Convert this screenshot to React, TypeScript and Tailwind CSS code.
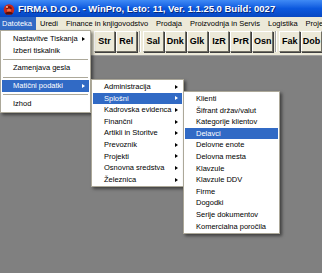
import React from "react";

const Arrow = ({ white }: { white?: boolean }) => (
  <span
    className={
      white
        ? "block w-0 h-0 border-y-[2.5px] border-y-transparent border-l-[3px] border-l-white"
        : "block w-0 h-0 border-y-[2.5px] border-y-transparent border-l-[3px] border-l-black"
    }
  />
);

function Item({ label, arrow, active }: { label: string; arrow?: boolean; active?: boolean }) {
  return (
    <div
      className={
        active
          ? "h-[11.6px] flex items-center justify-between pl-[11px] pr-[4px] bg-[#316AC5] text-white"
          : "h-[11.6px] flex items-center justify-between pl-[11px] pr-[4px] text-black"
      }
    >
      <span className="whitespace-nowrap leading-none">{label}</span>
      {arrow && <Arrow white={active} />}
    </div>
  );
}

const Sep = () => (
  <div className="h-[6.2px] flex items-center px-[1px]">
    <div className="h-px w-full bg-[#ACA899]" />
  </div>
);

function TBtn({ label }: { label: string }) {
  return (
    <div className="w-[21px] h-[21px] flex items-center justify-center bg-[#ECE9D8] border border-t-white border-l-white border-r-[#716F64] border-b-[#716F64] shadow-[1px_1px_0_#404040] text-[9px] font-bold text-black leading-none">
      {label}
    </div>
  );
}

const TSep = () => (
  <div className="h-[21px] w-[2px] mx-[1px] flex">
    <div className="w-px h-full bg-[#A0A0A0]" />
    <div className="w-px h-full bg-white" />
  </div>
);

export default function App() {
  const menubar = [
    "Datoteka",
    "Uredi",
    "Finance in knjigovodstvo",
    "Prodaja",
    "Proizvodnja in Servis",
    "Logistika",
    "Projekti",
  ];
  const sub1 = [
    "Administracija",
    "Splošni",
    "Kadrovska evidenca",
    "Finančni",
    "Artikli in Storitve",
    "Prevoznik",
    "Projekti",
    "Osnovna sredstva",
    "Železnica",
  ];
  const sub2 = [
    "Klienti",
    "Šifrant držav/valut",
    "Kategorije klientov",
    "Delavci",
    "Delovne enote",
    "Delovna mesta",
    "Klavzule",
    "Klavzule DDV",
    "Firme",
    "Dogodki",
    "Serije dokumentov",
    "Komercialna poročila",
  ];
  return (
    <div className="w-[322px] h-[273px] relative overflow-hidden bg-[#808080] flex flex-col font-['Liberation_Sans',Arial,sans-serif]">
      {/* Title bar */}
      <div className="h-[17px] shrink-0 flex items-center bg-gradient-to-b from-[#3f8af5] via-[#0b58de] to-[#0848c2]">
        <svg width="12" height="12" viewBox="0 0 12 12" className="ml-[3px] mr-[3px] shrink-0">
          <circle cx="6" cy="6.5" r="5.3" fill="#c8281a" />
          <path d="M3 5 Q6 1 9 5 L8.5 6 L3.5 6 Z" fill="#7a1208" />
          <circle cx="6" cy="7.5" r="2" fill="#f06a40" />
          <path d="M2 10 Q6 7 10 10 L9 11.5 L3 11.5 Z" fill="#5a0e06" />
          <circle cx="4" cy="4" r="0.9" fill="#ffd0b0" />
        </svg>
        <span className="text-white font-bold text-[9.5px] leading-none whitespace-nowrap [text-shadow:1px_1px_0_#0a2a7a]">
          FIRMA D.O.O. - WinPro, Leto: 11, Ver. 1.1.25.0 Build: 0027
        </span>
      </div>
      {/* Menu bar */}
      <div className="h-[13px] shrink-0 bg-[#ECE9D8] flex items-stretch text-[7.5px] whitespace-nowrap">
        {menubar.map((m, i) => (
          <div
            key={m}
            className={
              i === 0
                ? "ml-[-2px] px-[4px] flex items-center bg-[#316AC5] text-white leading-none"
                : "px-[4px] flex items-center text-black leading-none"
            }
          >
            {m}
          </div>
        ))}
      </div>
      {/* Toolbar */}
      <div className="h-[26px] shrink-0 bg-[#ECE9D8] flex items-start gap-[1px] pt-[1px] pl-[94px] border-b border-b-[#A0A0A0]">
        <TBtn label="Str" />
        <TBtn label="Rel" />
        <TSep />
        <TBtn label="Sal" />
        <TBtn label="Dnk" />
        <TBtn label="Glk" />
        <TBtn label="IzR" />
        <TBtn label="PrR" />
        <TBtn label="Osn" />
        <TSep />
        <TBtn label="Fak" />
        <TBtn label="Dob" />
      </div>
      <div className="flex-1 bg-[#808080]" />

      {/* Datoteka menu */}
      <div className="absolute left-0 top-[30px] w-[91px] bg-white border border-[#ACA899] px-[1px] py-[2px] text-[7.5px] shadow-[2px_2px_3px_rgba(0,0,0,0.5)]">
        <Item label="Nastavitve Tiskanja" arrow />
        <Item label="Izberi tiskalnik" />
        <Sep />
        <Item label="Zamenjava gesla" />
        <Sep />
        <Item label="Matični podatki" arrow active />
        <Sep />
        <Item label="Izhod" />
      </div>

      {/* Submenu 1 */}
      <div className="absolute left-[91px] top-[79px] w-[93px] bg-white border border-[#ACA899] px-[1px] py-[1px] text-[7.5px] shadow-[2px_2px_3px_rgba(0,0,0,0.5)]">
        {sub1.map((s) => (
          <Item key={s} label={s} arrow active={s === "Splošni"} />
        ))}
      </div>

      {/* Submenu 2 */}
      <div className="absolute left-[183px] top-[91px] w-[97px] bg-white border border-[#ACA899] px-[1px] py-[1px] text-[7.5px] shadow-[2px_2px_3px_rgba(0,0,0,0.5)]">
        {sub2.map((s) => (
          <Item key={s} label={s} active={s === "Delavci"} />
        ))}
      </div>
    </div>
  );
}
